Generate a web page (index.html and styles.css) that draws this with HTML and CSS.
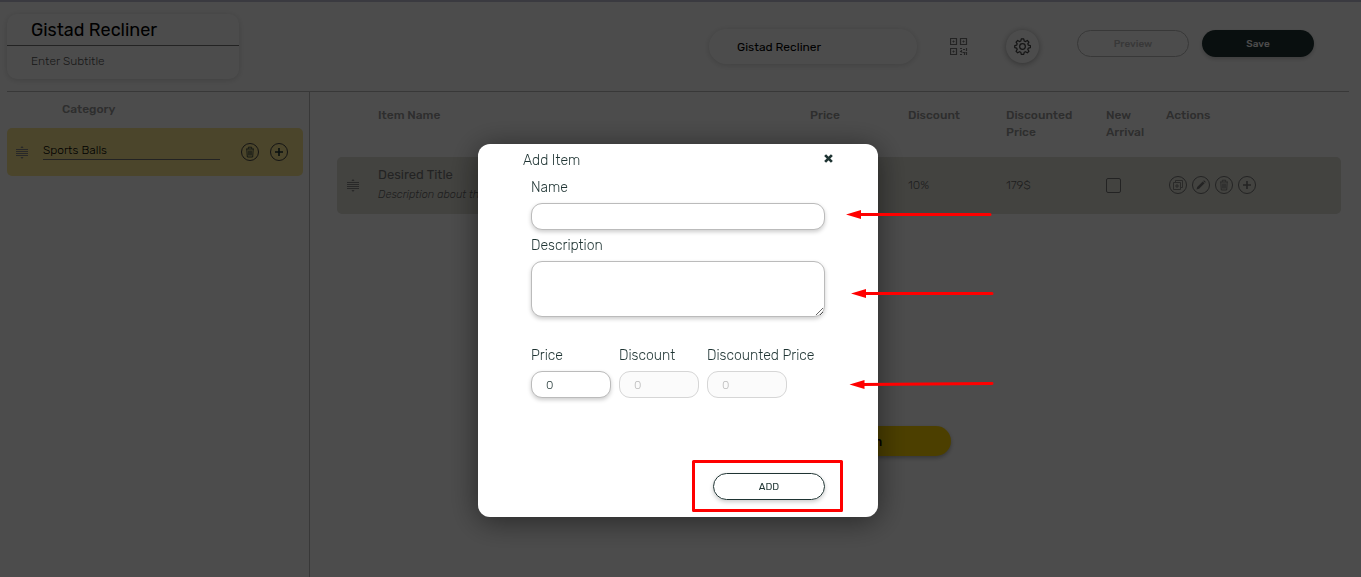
FILE: index.html
```
<!DOCTYPE html>
<html lang="en">
<head>
    <meta charset="UTF-8">
    <meta name="viewport" content="width=device-width, initial-scale=1.0">
    <title>Gistad Recliner</title>
    <link rel="stylesheet" href="styles.css">
</head>
<body>
    <!-- shared icons -->
    <svg class="sprite" aria-hidden="true">
        <symbol id="drag" viewBox="0 0 14 14">
            <path d="M1 4.500h12M1 6.500h12M1 8.500h12M1 10.500h12" stroke="currentColor" stroke-width="1" fill="none"/>
            <path d="M7 1l1.600 2H5.400zM7 14l1.600-2H5.400z" fill="currentColor"/>
        </symbol>
        <symbol id="trash" viewBox="0 0 12 12">
            <path d="M2 3h8M4.3 2.8V1.2h3.4v1.6M2.8 3.2l.5 7.8h5.4l.5-7.8M4.8 4.5v5M6 4.5v5M7.2 4.5v5" stroke="currentColor" stroke-width="0.8" fill="none"/>
        </symbol>
        <symbol id="plus" viewBox="0 0 12 12">
            <path d="M6 2v8M2 6h8" stroke="currentColor" stroke-width="1.6" fill="none"/>
        </symbol>
        <symbol id="pencil" viewBox="0 0 12 12">
            <path d="M1.5 10.5l.7-2.6 5.5-5.5 1.9 1.9-5.5 5.5zM8.2 1.9l.8-.7 1.8 1.8-.7.8z" fill="currentColor"/>
        </symbol>
        <symbol id="copy" viewBox="0 0 12 12">
            <path d="M1.5 3.5h7v7h-7zM3.5 3V1.5h7v7H9M5 5v4M3 7h4" stroke="currentColor" stroke-width="0.8" fill="none"/>
        </symbol>
    </svg>

    <div class="page">
        <header class="topbar">
            <div class="title-box">
                <input class="title-input" type="text" value="Gistad Recliner" aria-label="Title">
                <input class="subtitle-input" type="text" placeholder="Enter Subtitle" aria-label="Subtitle">
            </div>
            <div class="tools">
                <input class="menu-name" type="text" value="Gistad Recliner" aria-label="Menu name">
                <button class="qr-btn" type="button" aria-label="QR code">
                    <svg width="18" height="18" viewBox="0 0 18 18" fill="none" stroke="currentColor">
                        <path d="M.5.5h6v6h-6zM10.500.500h6v6h-6zM.5 10.500h6v6h-6z" stroke-width="1.200"/>
                        <path d="M3 3h1v1H3zM13 3h1v1h-1zM3 13h1v1H3z" fill="currentColor"/>
                        <path d="M10 10.500h2M13 11.500h2M16.500 10v3M11.500 12v2.500M12.500 14.500h3M10 16.500h2M14.500 15v2M16.500 14v3M10.500 13v1" stroke-width="1.200"/>
                    </svg>
                </button>
                <button class="gear-btn" type="button" aria-label="Settings">
                    <svg width="17" height="17" viewBox="0 0 18 18" fill="none" stroke="currentColor" stroke-width="1.3" stroke-linejoin="round">
                        <path d="M7.700 1h2.600l.5 2.200 1.400.6 1.900-1.200 1.700 1.700-1.200 1.900.6 1.400 2.200.5v2l-2.200.6-.6 1.400 1.200 1.900-1.700 1.700-1.900-1.200-1.400.6-.5 2.200H7.700l-.5-2.200-1.400-.6-1.900 1.200-1.700-1.700 1.200-1.900-.6-1.400L.8 10.100v-2l2-.5.6-1.400-1.200-1.900 1.700-1.700 1.900 1.200 1.400-.6z"/>
                        <circle cx="9" cy="9" r="3"/>
                    </svg>
                </button>
                <button class="pill preview-btn" type="button" disabled>Preview</button>
                <button class="pill save-btn" type="button">Save</button>
            </div>
        </header>

        <div class="content">
            <aside class="sidebar">
                <h2>Category</h2>
                <div class="category">
                    <svg class="drag"><use href="#drag"/></svg>
                    <input type="text" value="Sports Balls" aria-label="Category name">
                    <button class="round" type="button" aria-label="Delete category"><svg><use href="#trash"/></svg></button>
                    <button class="round" type="button" aria-label="Add category"><svg><use href="#plus"/></svg></button>
                </div>
            </aside>

            <main class="items">
                <table>
                    <thead>
                        <tr>
                            <th class="col-drag"></th>
                            <th class="col-name">Item Name</th>
                            <th class="col-num">Price</th>
                            <th class="col-num">Discount</th>
                            <th class="col-num">Discounted Price</th>
                            <th class="col-new">New Arrival</th>
                            <th class="col-actions">Actions</th>
                        </tr>
                    </thead>
                    <tbody>
                        <tr>
                            <td class="col-drag"><svg class="drag"><use href="#drag"/></svg></td>
                            <td>
                                <div class="item-title">Desired Title</div>
                                <div class="item-desc">Description about the item</div>
                            </td>
                            <td>199$</td>
                            <td>10%</td>
                            <td>179$</td>
                            <td><input type="checkbox" aria-label="New arrival"></td>
                            <td>
                                <div class="actions">
                                    <button class="round" type="button" aria-label="Duplicate"><svg><use href="#copy"/></svg></button>
                                    <button class="round" type="button" aria-label="Edit"><svg><use href="#pencil"/></svg></button>
                                    <button class="round" type="button" aria-label="Delete"><svg><use href="#trash"/></svg></button>
                                    <button class="round" type="button" aria-label="Add"><svg><use href="#plus"/></svg></button>
                                </div>
                            </td>
                        </tr>
                    </tbody>
                </table>
                <button class="new-item" type="button">Add New Item</button>
            </main>
        </div>
    </div>

    <div class="overlay">
        <div class="modal" role="dialog" aria-labelledby="modalTitle">
            <div class="modal-head">
                <h3 id="modalTitle">Add Item</h3>
                <button class="close" type="button" aria-label="Close">
                    <svg width="9" height="9" viewBox="0 0 8 8"><path d="M1 1l6 6M7 1L1 7" stroke="currentColor" stroke-width="2.400"/></svg>
                </button>
            </div>
            <form>
                <label for="name">Name</label>
                <input id="name" class="field" type="text">
                <label for="description">Description</label>
                <textarea id="description" class="field"></textarea>
                <div class="prices">
                    <div class="price-cell">
                        <label for="price">Price</label>
                        <input id="price" class="field" type="text" value="0">
                    </div>
                    <div class="price-cell">
                        <label for="discount">Discount</label>
                        <input id="discount" class="field" type="text" value="0" disabled>
                    </div>
                    <div class="price-cell">
                        <label for="discounted">Discounted Price</label>
                        <input id="discounted" class="field" type="text" value="0" disabled>
                    </div>
                </div>
                <div class="modal-foot">
                    <button class="pill add-btn" type="button">ADD</button>
                </div>
            </form>

            <!-- pointers to the fields -->
            <svg class="marks" width="520" height="374" viewBox="0 0 520 374" fill="none" stroke="#f00" stroke-width="3" stroke-linecap="round">
                <path d="M380 70.500H512M385 149.500H514M384 240.500L514 239.500"/>
                <path d="M368 70.500l15-4.500v9zM373 149.500l15-4.500v9zM371.500 240.500l15-4.500v9z" fill="#f00" stroke="none"/>
                <rect x="215.500" y="317.500" width="148" height="49" stroke-linejoin="round"/>
            </svg>
        </div>
    </div>
</body>
</html>
```
FILE: styles.css
```
* {
    box-sizing: border-box;
}
body {
    margin: 0;
    font-family: Rubik, Roboto, sans-serif;
    font-size: 13px;
    font-weight: 300;
    color: #1f3433;
    background: #fff;
}
input, button, textarea {
    font-family: inherit;
    font-weight: inherit;
    color: inherit;
}
button {
    padding: 0;
    border: none;
    background: none;
    cursor: pointer;
}
h2, h3 {
    margin: 0;
}
.sprite {
    display: none;
}
.page {
    display: flex;
    flex-direction: column;
    min-height: 100vh;
    padding: 12px 12px 0 7px;
    border-top: 2px solid #c4c2d6;
}

/* top bar */
.topbar {
    display: flex;
    justify-content: space-between;
    align-items: flex-start;
    height: 78px;
    border-bottom: 1px solid #bbb;
}
.title-box {
    width: 232px;
    height: 65px;
    border-radius: 10px;
    box-shadow: 0 1px 6px rgba(0,0,0,0.16);
}
.title-box input {
    display: block;
    width: 100%;
    padding: 0 24px;
    border: none;
    background: none;
}
.title-box .title-input {
    height: 32px;
    font-size: 18px;
    font-weight: 400;
    color: #000;
    border-bottom: 1px solid #777;
}
.title-box .subtitle-input {
    height: 30px;
    font-size: 12px;
}
.subtitle-input::placeholder {
    color: #555;
}
.tools {
    display: flex;
    align-items: center;
    padding: 15px 35px 0 0;
}
.menu-name {
    width: 208px;
    height: 35px;
    padding: 0 28px;
    border: none;
    border-radius: 18px;
    font-size: 12px;
    font-weight: 400;
    color: #000;
    background: #fff;
    box-shadow: 0 1px 6px rgba(0,0,0,0.16);
}
.qr-btn {
    height: 18px;
    margin: 0 38px 0 33px;
    color: #777;
}
.gear-btn {
    display: flex;
    align-items: center;
    justify-content: center;
    width: 33px;
    height: 33px;
    margin-right: 38px;
    border-radius: 50%;
    color: #444;
    box-shadow: 0 1px 6px rgba(0,0,0,0.35);
}
.pill {
    width: 112px;
    height: 27px;
    border-radius: 14px;
    font-size: 10px;
    font-weight: 500;
}
.preview-btn {
    margin: 0 13px 6px 0;
    border: 1px solid #bbb;
    color: #bbb;
}
.save-btn {
    margin-bottom: 6px;
    color: #fff;
    background: #1f3433;
    box-shadow: 0 2px 4px rgba(0,0,0,0.2);
}

/* categories */
.content {
    display: flex;
    flex: 1;
}
.sidebar {
    width: 303px;
    padding-right: 6px;
    border-right: 1px solid #bbb;
}
.sidebar h2 {
    padding: 9px 0 10px 55px;
    font-size: 12px;
    font-weight: 500;
    line-height: 17px;
    color: #999;
}
.category {
    display: flex;
    align-items: center;
    height: 48px;
    padding: 0 15px 0 8px;
    border-radius: 5px;
    background: #fae78f;
}
.category input {
    flex: 1;
    min-width: 0;
    height: 20px;
    margin: 0 10px 4px 14px;
    padding: 0;
    border: none;
    border-bottom: 1px solid #777;
    font-size: 12px;
    color: #000;
    background: none;
}
.drag {
    display: block;
    width: 14px;
    height: 14px;
    color: #888;
}
.round {
    display: flex;
    align-items: center;
    justify-content: center;
    width: 18px;
    height: 18px;
    border: 1px solid #444;
    border-radius: 50%;
}
.round svg {
    width: 12px;
    height: 12px;
}
.category .round {
    margin-left: 11px;
}

/* items */
.items {
    display: flex;
    flex: 1;
    flex-direction: column;
    align-items: center;
    padding: 15px 8px 0 27px;
}
table {
    width: 100%;
    table-layout: fixed;
    border-collapse: collapse;
}
th, td {
    padding: 0;
    text-align: left;
}
th {
    height: 50px;
    font-size: 12px;
    font-weight: 500;
    line-height: 17px;
    vertical-align: top;
    color: #999;
}
td {
    height: 57px;
    padding-bottom: 1px;
    font-size: 12px;
    color: #666;
    background: #dfdfd6;
}
td:first-child {
    padding-left: 9px;
    border-radius: 5px 0 0 5px;
}
td:last-child {
    border-radius: 0 5px 5px 0;
}
.col-drag {
    width: 41px;
}
.col-num {
    width: 98px;
}
.col-num:nth-child(5) {
    width: 100px;
    padding-right: 20px;
}
.col-new {
    width: 60px;
}
.col-actions {
    width: 175px;
}
.item-title {
    font-size: 13px;
    font-weight: 400;
    line-height: 20px;
    color: #777;
}
.item-desc {
    font-style: italic;
    font-size: 11px;
    line-height: 20px;
}
td input[type="checkbox"] {
    display: block;
    appearance: none;
    width: 15px;
    height: 15px;
    margin: 0;
    border: 1px solid #777;
    border-radius: 2px;
}
.actions {
    display: flex;
    gap: 5px;
    padding-left: 3px;
}
.actions .round {
    border-color: #777;
    color: #777;
}
.new-item {
    width: 224px;
    height: 30px;
    margin-top: 212px;
    border-radius: 16px;
    font-size: 13px;
    font-weight: 500;
    color: #000;
    background: #ffd400;
    box-shadow: 0 2px 4px rgba(0,0,0,0.3);
}

/* modal */
.overlay {
    position: fixed;
    inset: 0;
    display: flex;
    justify-content: center;
    align-items: flex-start;
    padding: 144px 5px 0 0;
    background: rgba(0,0,0,0.7);
}
.modal {
    position: relative;
    width: 400px;
    padding: 8px 45px 17px;
    border-radius: 12px;
    background: #fff;
    box-shadow: 0 4px 30px rgba(0,0,0,0.5);
}
.modal-head {
    display: flex;
    justify-content: space-between;
    align-items: flex-start;
}
.modal-head h3 {
    font-size: 14px;
    font-weight: 300;
    line-height: 17px;
}
.close {
    height: 9px;
    margin: 2px 0 0 0;
}
.close svg {
    display: block;
}
.modal form {
    padding: 10px 8px 0;
}
.modal label {
    display: block;
    margin-bottom: 7px;
    font-size: 14px;
    line-height: 17px;
    white-space: nowrap;
}
.field {
    display: block;
    width: 100%;
    height: 27px;
    margin-bottom: 7px;
    padding: 0 14px;
    border: 1px solid #bbb;
    border-radius: 11px;
    font-size: 12px;
    background: #fff;
    box-shadow: 0 2px 4px rgba(0,0,0,0.2);
}
textarea.field {
    height: 56px;
    margin-bottom: 30px;
    resize: vertical;
}
.field:disabled {
    border-color: #d6d6d6;
    color: #bbb;
    background: #fbfbfb;
    box-shadow: none;
}
.prices {
    display: flex;
    gap: 8px;
}
.price-cell {
    width: 80px;
}
.modal-foot {
    display: flex;
    justify-content: flex-end;
    padding-top: 68px;
}
.add-btn {
    font-weight: 400;
    border: 1px solid #1f3433;
    box-shadow: 0 2px 4px rgba(0,0,0,0.2);
}
.marks {
    position: absolute;
    top: 0;
    left: 0;
    pointer-events: none;
}
```
